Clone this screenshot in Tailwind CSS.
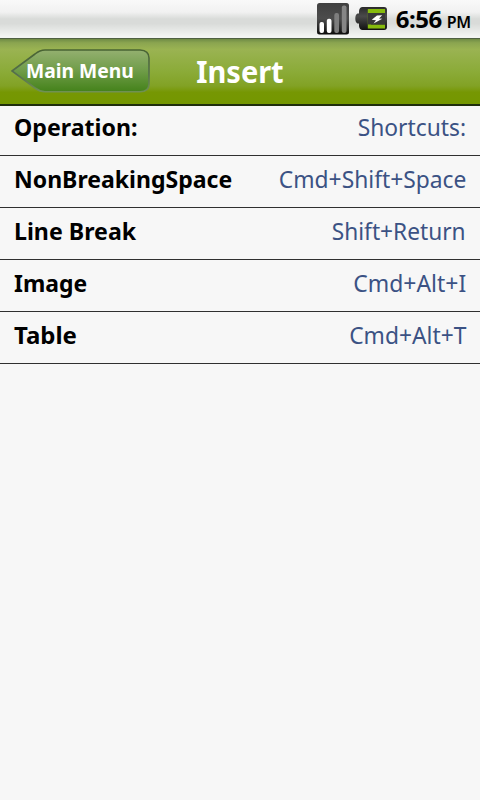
<!DOCTYPE html>
<html lang="en">
<head>
  <meta charset="UTF-8" />
  <meta name="viewport" content="width=device-width, initial-scale=1.0"/>
  <title>Insert</title>
  <script src="https://cdn.jsdelivr.net/npm/@tailwindcss/browser@4"></script>
</head>
<body class="bg-[#f7f7f7] text-black min-h-screen overflow-hidden font-['Noto_Sans',sans-serif]">
  <!-- Status bar -->
  <div class="h-[38px] flex items-start justify-end pr-[9px] bg-[linear-gradient(#f9f9f9_0%,#f1f1f1_32%,#d9dbd9_50%,#d9dbd9_62%,#f3f5f3_96%)]">
    <svg class="mt-[3px] mr-[6px]" width="32" height="32" viewBox="0 0 32 32">
      <defs>
        <linearGradient id="sig" x1="0" y1="0" x2="0" y2="1">
          <stop offset="0" stop-color="#404040"/>
          <stop offset="0.5" stop-color="#4c4c4c"/>
          <stop offset="1" stop-color="#0c0c0c"/>
        </linearGradient>
      </defs>
      <rect x="0" y="0" width="32" height="31.5" rx="2.5" fill="url(#sig)"/>
      <rect x="2.500" y="19" width="4.500" height="11" rx="2" fill="#fff"/>
      <rect x="9.800" y="15.800" width="4.700" height="14.200" rx="2" fill="#fff"/>
      <rect x="17.300" y="10" width="4.700" height="20" rx="2" fill="#7d7d7d"/>
      <rect x="24.800" y="2.500" width="4.700" height="27.500" rx="2" fill="#868686"/>
    </svg>
    <svg class="mt-[7px] mr-[9px]" width="32" height="24" viewBox="0 0 32 24">
      <defs>
        <linearGradient id="bat" x1="0" y1="0" x2="0" y2="1">
          <stop offset="0" stop-color="#2a2a2a"/>
          <stop offset="0.4" stop-color="#4a4a4a"/>
          <stop offset="1" stop-color="#111"/>
        </linearGradient>
      </defs>
      <path d="M7.500 0H29Q32 0 32 3V20Q32 23 29 23H7.500Q4.500 23 4 19V16.500H2.500Q0.300 15.500 0.300 11.500Q0.300 7.500 2.500 6.500H4V4Q4.500 0 7.500 0Z" fill="url(#bat)"/>
      <path d="M12.800 2H30V6H16Q14.500 11.500 16 17.500H30V21.500H12.800Z" fill="#86bb0d"/>
      <path d="M12.800 6H30V17.500H12.800Z" fill="#383838"/>
      <path d="M22 8.500L27.200 8.200L24 11.500L27.300 11.800L18.500 16.500L21 13.200L16.700 12.800Z" fill="#fff"/>
    </svg>
    <div class="flex items-baseline leading-[38px] font-semibold">
      <span class="inline-block w-[47px] text-[24px] font-bold tracking-[-0.5px] whitespace-nowrap">6:56</span>
      <span class="ml-[4px] text-[16px] tracking-[-0.2px]">PM</span>
    </div>
  </div>

  <!-- Toolbar -->
  <header class="relative h-[68px] border-t border-t-[#4f6042] border-b-2 border-b-[#1f2e0c] bg-[linear-gradient(#6f8b45_0%,#8ba550_6%,#9ab352_16%,#8bab38_50%,#82a225_72%,#769703_82%,#749700_100%)]">
    <a class="absolute left-[11px] top-[10px] h-[44px] w-[140px]" href="#">
      <svg class="absolute inset-0" width="140" height="44" viewBox="0 0 140 44">
        <defs>
          <linearGradient id="back" x1="0" y1="0" x2="0" y2="1">
            <stop offset="0" stop-color="#94b070"/>
            <stop offset="0.5" stop-color="#6f9c48"/>
            <stop offset="1" stop-color="#44821a"/>
          </linearGradient>
          <linearGradient id="edge" x1="0" y1="0" x2="0" y2="1">
            <stop offset="0" stop-color="#486332"/>
            <stop offset="0.6" stop-color="#56704f"/>
            <stop offset="1" stop-color="#6f9152"/>
          </linearGradient>
        </defs>
        <path d="M1 22L24 5Q29 1 34 1H129Q138 1.500 138 9V35Q138 42.700 129 42.700H34Q29 42.700 24 39Z" fill="url(#back)" stroke="url(#edge)" stroke-width="1.600"/>
      </svg>
      <span class="absolute left-[15px] top-0 leading-[43px] text-[20px] font-bold text-white whitespace-nowrap origin-left scale-x-[0.965]">Main Menu</span>
    </a>
    <h1 class="h-full text-center leading-[65px] text-[30px] font-bold text-white scale-x-[0.965]">Insert</h1>
  </header>

  <!-- Shortcut list -->
  <ul class="text-[24px] leading-8">
    <li class="h-[50px] pt-[5px] px-[14px] flex justify-between border-b border-[#303030]">
      <span class="font-bold origin-left scale-x-[0.965]">Operation:</span>
      <span class="text-[#3b5284] origin-right scale-x-[0.95]">Shortcuts:</span>
    </li>
    <li class="h-[52px] pt-[7px] px-[14px] flex justify-between border-b border-[#303030]">
      <span class="font-bold origin-left scale-x-[0.96]">NonBreakingSpace</span>
      <span class="text-[#3b5284] origin-right scale-x-[0.95]">Cmd+Shift+Space</span>
    </li>
    <li class="h-[52px] pt-[7px] px-[14px] flex justify-between border-b border-[#303030]">
      <span class="font-bold origin-left scale-x-[0.965]">Line Break</span>
      <span class="text-[#3b5284] origin-right scale-x-[0.945]">Shift+Return</span>
    </li>
    <li class="h-[52px] pt-[7px] px-[14px] flex justify-between border-b border-[#303030]">
      <span class="font-bold origin-left scale-x-[0.955]">Image</span>
      <span class="text-[#3b5284] origin-right scale-x-[0.955]">Cmd+Alt+I</span>
    </li>
    <li class="h-[52px] pt-[7px] px-[14px] flex justify-between border-b border-[#303030]">
      <span class="font-bold">Table</span>
      <span class="text-[#3b5284] origin-right scale-x-[0.95]">Cmd+Alt+T</span>
    </li>
  </ul>
</body>
</html>
